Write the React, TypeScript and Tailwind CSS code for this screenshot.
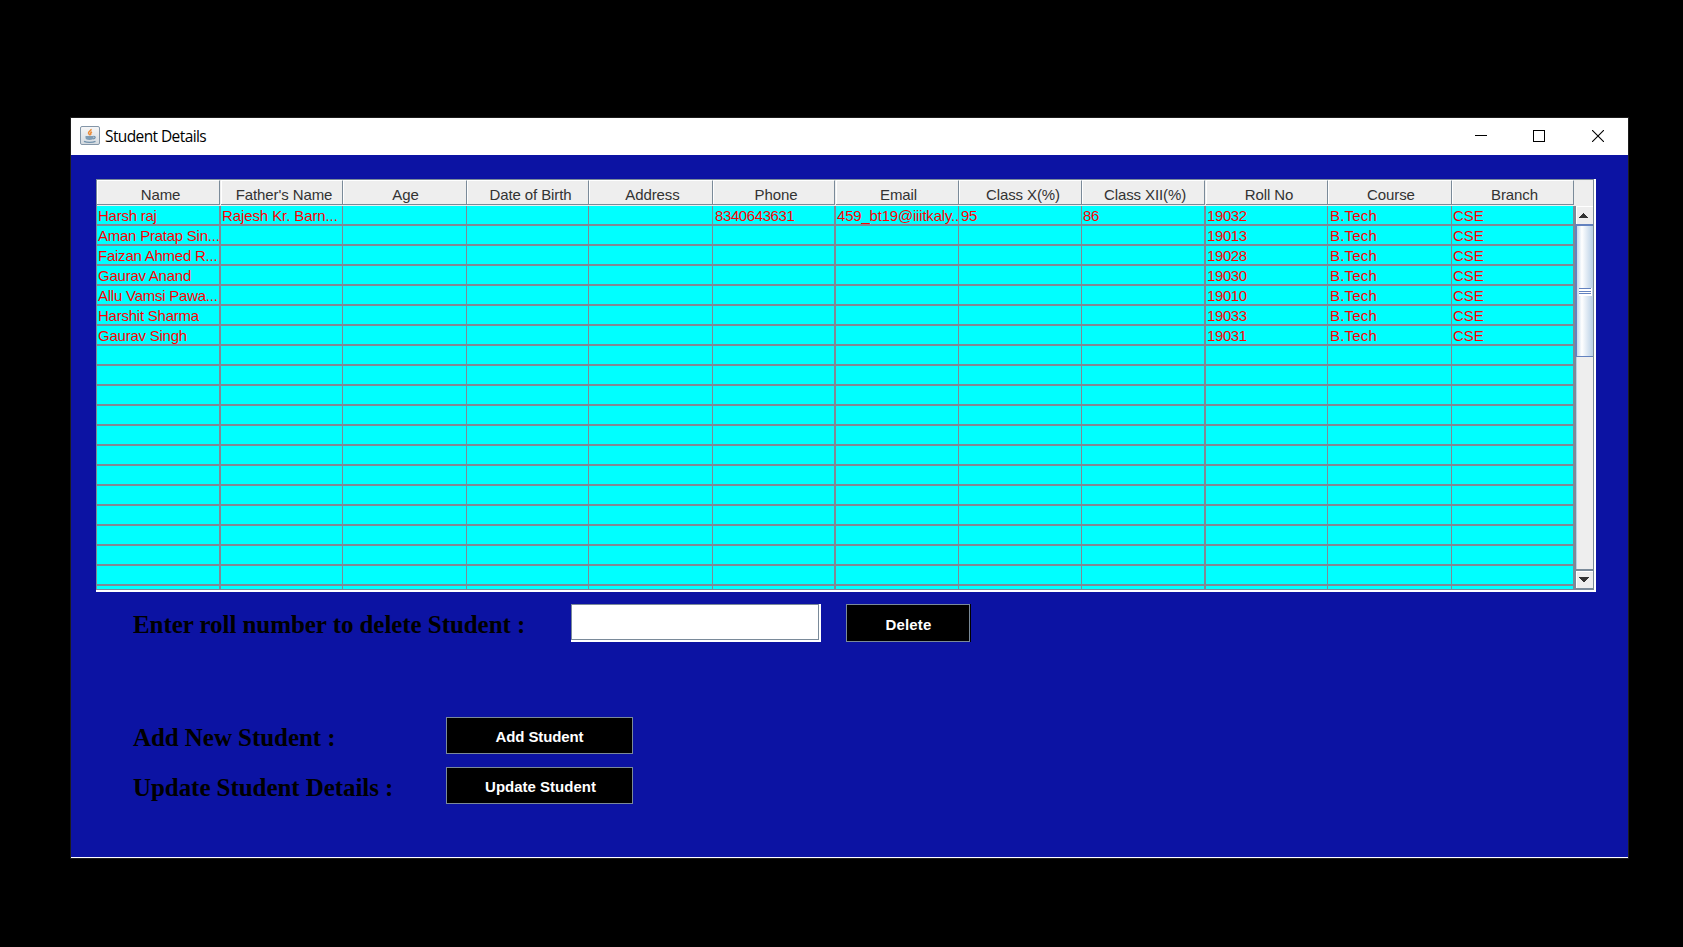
const columns = [
  { title: "Name", w: "w-[124px]", line: "border-r-2", head: "w-[123px] mr-px pl-[5px]", cell: "pl-px tracking-[-0.24px]" },
  { title: "Father's Name", w: "w-[122px]", line: "border-r", head: "w-[122px] pl-[5px]", cell: "pl-px tracking-[-0.1px]" },
  { title: "Age", w: "w-[124px]", line: "border-r", head: "w-[124px] pl-[2px]", cell: "pl-px" },
  { title: "Date of Birth", w: "w-[122px]", line: "border-r", head: "w-[122px] pl-[6px]", cell: "pl-px" },
  { title: "Address", w: "w-[124px]", line: "border-r", head: "w-[124px] pl-[4px]", cell: "pl-px" },
  { title: "Phone", w: "w-[123px]", line: "border-r-2", head: "w-[122px] mr-px pl-[5px]", cell: "pl-[2px] tracking-[-0.4px]" },
  { title: "Email", w: "w-[123px]", line: "border-r", head: "w-[123px] pl-[3px]", cell: "pl-px tracking-[-0.2px]" },
  { title: "Class X(%)", w: "w-[123px]", line: "border-r", head: "w-[123px] pl-[6px]", cell: "pl-[2px] tracking-[-0.3px]" },
  { title: "Class XII(%)", w: "w-[124px]", line: "border-r-2", head: "w-[123px] mr-px pl-[4px]", cell: "pl-px tracking-[-0.3px]" },
  { title: "Roll No", w: "w-[122px]", line: "border-r", head: "w-[122px] pl-[5px]", cell: "pl-px tracking-[-0.4px]" },
  { title: "Course", w: "w-[124px]", line: "border-r", head: "w-[124px] pl-[3px]", cell: "pl-[2px] tracking-[0.2px]" },
  { title: "Branch", w: "w-[122px]", line: "border-r", head: "w-[122px] pl-[4px]", cell: "pl-px" },
];

const students = [
  ["Harsh raj", "Rajesh Kr. Barn...", "", "", "", "8340643631", "459_bt19@iiitkaly..", "95", "86", "19032", "B.Tech", "CSE"],
  ["Aman Pratap Sin...", "", "", "", "", "", "", "", "", "19013", "B.Tech", "CSE"],
  ["Faizan Ahmed R...", "", "", "", "", "", "", "", "", "19028", "B.Tech", "CSE"],
  ["Gaurav Anand", "", "", "", "", "", "", "", "", "19030", "B.Tech", "CSE"],
  ["Allu Vamsi Pawa...", "", "", "", "", "", "", "", "", "19010", "B.Tech", "CSE"],
  ["Harshit Sharma", "", "", "", "", "", "", "", "", "19033", "B.Tech", "CSE"],
  ["Gaurav Singh", "", "", "", "", "", "", "", "", "19031", "B.Tech", "CSE"],
];

const rows = Array.from({ length: 20 }, (_, i) => students[i] ?? []);

function JavaIcon() {
  return (
    <svg className="mb-[2px]" width="20" height="19" viewBox="0 0 20 19" fill="none">
      <defs>
        <linearGradient id="tile" x1="0" y1="0" x2="0" y2="1">
          <stop offset="0" stopColor="#f7f7f7" />
          <stop offset="1" stopColor="#d3d9df" />
        </linearGradient>
      </defs>
      <rect x="0.5" y="0.5" width="19" height="18" rx="1.5" fill="url(#tile)" stroke="#8496a8" />
      <path d="M11 3c.8 1.700-3 2.500-2.500 4.200.3.900 1.500 1.200 1.300 2.300M12 5.800c-1.900 1-1.500 1.500-.8 2.800" stroke="#ec8a35" strokeWidth="1.500" />
      <path d="M5.500 10h8v1.800c0 1.500-1.500 2.200-4 2.200s-4-.7-4-2.200z" fill="#7f9cb4" />
      <path d="M13.500 10.500c2.500-.3 2 2.300-.5 2.300M4 15.300c3 1.400 8.500 1.400 11.500 0" stroke="#7191ac" strokeWidth="1.300" />
    </svg>
  );
}

function TitleBar() {
  return (
    <header className="flex h-[37px] shrink-0 items-center bg-white pl-[9px]">
      <JavaIcon />
      <h1 className="ml-[5px] flex-1 font-['Open_Sans',sans-serif] text-[15.5px] tracking-[-0.6px] text-black">
        Student Details
      </h1>
      <div className="mb-px flex items-center pr-[24px]">
        <svg className="mr-[46px]" width="12" height="12" shapeRendering="crispEdges"><path d="M0 5.500h12" stroke="#000" /></svg>
        <svg className="mr-[47px]" width="12" height="12" shapeRendering="crispEdges"><path d="M.5.500h11v11H.5z" stroke="#000" fill="none" /></svg>
        <svg width="12" height="12"><path d="M0 0l12 12M12 0L0 12" stroke="#000" strokeWidth="1.100" /></svg>
      </div>
    </header>
  );
}

function ScrollBar() {
  return (
    <div className="flex w-[19px] flex-col border-l-2 border-[#7a8a99] bg-[#eeeeee]">
      <div className="flex h-[18px] items-center border-t border-l border-white pl-[2px]">
        <svg width="9" height="5" shapeRendering="crispEdges"><path d="M4 0h1l4 5H0z" fill="#333" /></svg>
      </div>
      <div className="-ml-[1px] flex h-[133px] items-center border-t-2 border-b border-l-2 border-[#6382bf] bg-linear-to-r from-[#c8d9ea] via-white via-30% to-[#b8cfe5] pt-[2px] pl-[2px]">
        <svg width="13" height="8" shapeRendering="crispEdges">
          <path d="M0 0h13v8H0z" fill="#fff" />
          <path d="M0 .5h12M0 3.500h12M0 5.500h12" stroke="#6382bf" />
        </svg>
      </div>
      <div className="flex-1 border-l border-[#b8cfe5]" />
      <div className="flex h-[20px] items-center border-t-2 border-b border-[#7a8a99] pl-[2px] shadow-[inset_1px_1px_0_#fff]">
        <svg width="11" height="5" shapeRendering="crispEdges"><path d="M0 0h11L6 5H5z" fill="#333" /></svg>
      </div>
    </div>
  );
}

function StudentTable() {
  return (
    <div className="ml-[25px] h-[413px] w-[1500px] border-r-2 border-b-2 border-white font-['Liberation_Sans',sans-serif] text-[15px]">
      <div className="flex h-[411px] w-[1498px] flex-col border border-[#7a8a99]">
        <div className="flex h-[26px] shrink-0 bg-[#eeeeee]">
          {columns.map((c) => (
            <div key={c.title} className={`${c.head} mb-px flex shrink-0 items-center justify-center border-t border-r border-b border-t-white border-r-[#7a8a99] border-b-[#7a8a99] pt-[4px] leading-[18px] tracking-[-0.1px] whitespace-nowrap text-[#333333] shadow-[inset_1px_0_0_#fff]`}>
              {c.title}
            </div>
          ))}
        </div>
        <div className="flex min-h-0 flex-1">
          <div className="w-[1477px] shrink-0 overflow-hidden bg-[#00ffff]">
            {rows.map((row, i) => (
              <div key={i} className="flex h-[20px] border-b-2 border-[#808895]">
                {columns.map((c, j) => (
                  <div key={c.title} className={`${c.w} ${c.line} ${c.cell} shrink-0 border-[#808895] leading-[20px] whitespace-nowrap text-[#ff0000]`}>
                    {row[j]}
                  </div>
                ))}
              </div>
            ))}
          </div>
          <ScrollBar />
        </div>
      </div>
    </div>
  );
}

const label = "font-['Liberation_Serif',serif] text-[25px] leading-[30px] font-bold tracking-[-0.06px] text-black";
const button =
  "border border-[#7a8a99] bg-black font-['Liberation_Sans',sans-serif] text-[15px] font-bold text-white";

export default function App() {
  return (
    <div className="flex h-[947px] w-[1683px] bg-black pt-[118px] pl-[71px]">
      <main className="flex h-[740px] w-[1557px] flex-col border-b border-white bg-[#0c13a3] shadow-[0_0_0_1px_#1c1c1c]">
        <TitleBar />
        <section className="pt-[24px]">
          <StudentTable />
          <form className="mt-[12px] flex pl-[62px]" onSubmit={(e) => e.preventDefault()}>
            <label className={`${label} w-[438px] pt-[6px]`}>Enter roll number to delete Student :</label>
            <div className="h-[38px] w-[250px] border-r-2 border-b-2 border-white">
              <input className="block h-[36px] w-[248px] border border-[#7a8a99] bg-white px-1 outline-none" />
            </div>
            <button className={`${button} ml-[25px] h-[38px] w-[124px] pt-[5px] pl-px tracking-[0.2px] shadow-[1px_0_0_#000]`}>Delete</button>
          </form>
          <div className="mt-[75px] flex pl-[62px]">
            <span className={`${label} w-[313px] pt-[6px]`}>Add New Student :</span>
            <button className={`${button} h-[37px] w-[187px] pt-[3px] tracking-[-0.1px]`}>Add Student</button>
          </div>
          <div className="mt-[13px] flex pl-[62px]">
            <span className={`${label} w-[313px] pt-[6px]`}>Update Student Details :</span>
            <button className={`${button} h-[37px] w-[187px] pt-[3px] pl-[2px]`}>Update Student</button>
          </div>
        </section>
      </main>
    </div>
  );
}
